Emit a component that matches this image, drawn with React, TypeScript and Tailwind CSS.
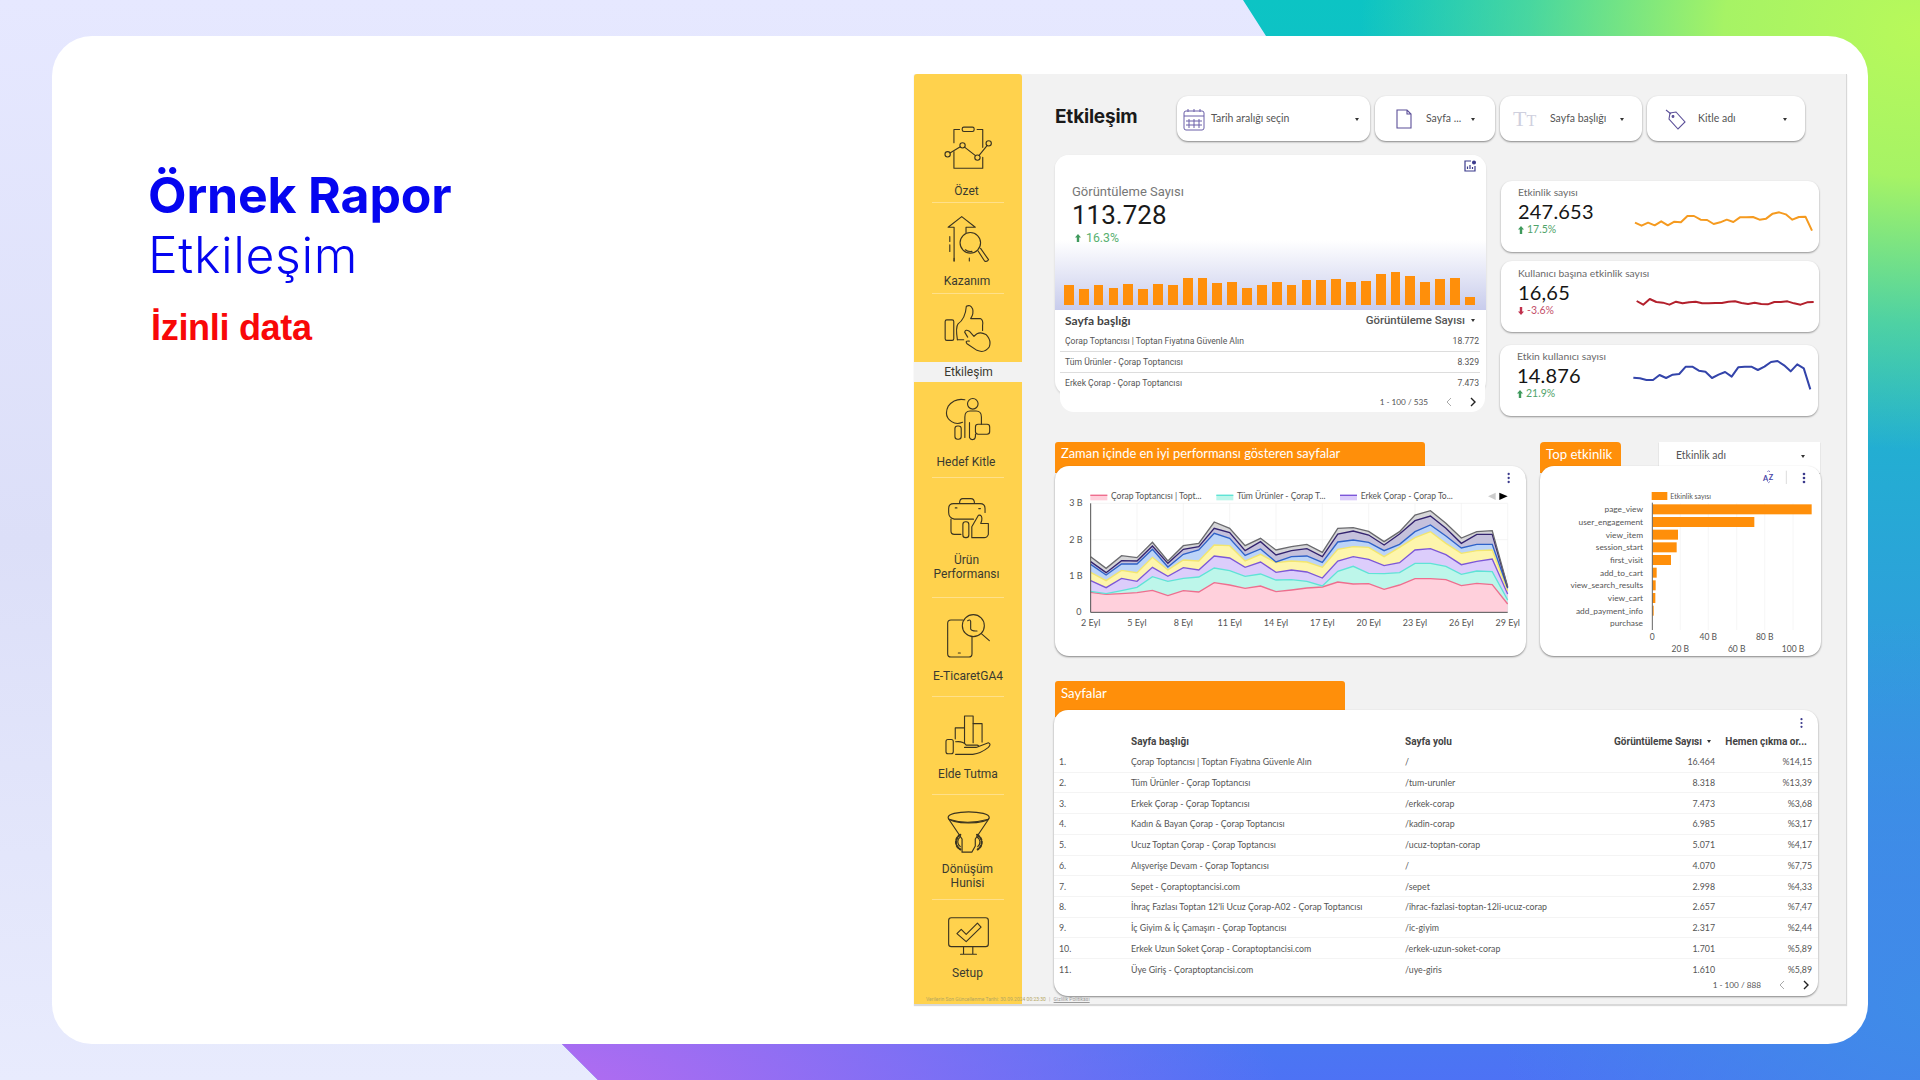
import React from "react";

const barTops = [616,627,616,625,612,627,612,614,593,593,608,605,623,616,605,616,599,599,597,605,603,582,577,588,605,597,595,652];
const s1 = [428,437,428,436,424,436,425,427,408,408,419,420,432,427,419,426,412,412,411,419,416,401,397,403,419,411,410,452];
const s2 = [663,674,657,666,668,674,665,670,667,665,670,670,669,669,665,664,669,672,668,672,673,666,666,664,670,674,667,666];
const s3 = [893,895,900,900,885,894,884,882,860,860,872,875,894,884,876,890,862,860,860,870,860,846,843,856,874,853,865,928];

const layers = [
  { fill: "#ffd0dc", stroke: "#ee6e8e", d: [487,493,491,488,481,497,482,486,458,465,475,468,485,480,474,471,456,462,461,478,465,446,446,449,467,460,464,522] },
  { fill: "#bdf6ea", stroke: "#5fe3d6", d: [484,491,482,472,440,454,445,441,414,422,439,432,450,449,454,468,424,409,430,431,428,400,400,409,433,423,425,510] },
  { fill: "#dccdfb", stroke: "#7c57d8", d: [452,473,445,454,412,439,413,420,378,384,412,396,427,420,426,444,393,380,388,407,398,360,356,374,404,394,387,492] },
  { fill: "#fdf5ac", stroke: "#f3e66e", d: [427,452,421,428,382,420,390,393,345,347,393,373,398,393,396,412,358,350,352,380,352,323,305,340,370,362,360,482] },
  { fill: "#bcd4f8", stroke: "#2f62c8", d: [403,435,402,402,358,411,373,360,310,325,376,357,396,380,378,397,336,330,337,362,343,305,285,318,354,343,343,475] },
  { fill: "#c5c1dc", stroke: "#33236f", d: [395,428,392,393,348,400,358,350,295,308,362,335,375,362,356,380,312,303,315,345,312,272,258,295,340,313,313,472] },
  { fill: "#d6d6d8", stroke: "#6a6a6e", d: [380,415,377,383,337,393,347,340,276,295,347,325,360,350,343,367,295,293,304,335,305,255,242,280,324,305,302,470] },
];

const pages = [
  ["1.", "Çorap Toptancısı | Toptan Fiyatına Güvenle Alın", "/", "16.464", "%14,15"],
  ["2.", "Tüm Ürünler - Çorap Toptancısı", "/tum-urunler", "8.318", "%13,39"],
  ["3.", "Erkek Çorap - Çorap Toptancısı", "/erkek-corap", "7.473", "%3,68"],
  ["4.", "Kadın & Bayan Çorap - Çorap Toptancısı", "/kadin-corap", "6.985", "%3,17"],
  ["5.", "Ucuz Toptan Çorap - Çorap Toptancısı", "/ucuz-toptan-corap", "5.071", "%4,17"],
  ["6.", "Alışverişe Devam - Çorap Toptancısı", "/", "4.070", "%7,75"],
  ["7.", "Sepet - Çoraptoptancisi.com", "/sepet", "2.998", "%4,33"],
  ["8.", "İhraç Fazlası Toptan 12'li Ucuz Çorap-A02 - Çorap Toptancısı", "/ihrac-fazlasi-toptan-12li-ucuz-corap", "2.657", "%7,47"],
  ["9.", "İç Giyim & İç Çamaşırı - Çorap Toptancısı", "/ic-giyim", "2.317", "%2,44"],
  ["10.", "Erkek Uzun Soket Çorap - Coraptoptancisi.com", "/erkek-uzun-soket-corap", "1.701", "%5,89"],
  ["11.", "Üye Giriş - Çoraptoptancisi.com", "/uye-giris", "1.610", "%5,89"],
];

const X = (i: number) => 152 + (1403 - 152) * i / 27;

function Ico({ vb, w, h, children }: { vb: string; w: number; h: number; children: React.ReactNode }) {
  return (
    <svg viewBox={vb} width={w} height={h} fill="none" stroke="#3b3420" strokeWidth={3.4} strokeLinecap="round" strokeLinejoin="round">
      {children}
    </svg>
  );
}

const icons = {
  ozet: (
    <Ico vb="122 195 154 135" w={51} h={45}>
      <rect x="180" y="201" width="36" height="13" rx="5" />
      <path d="M172 208H155V248M225 208H242V262M155 275V325H242V292" />
      <circle cx="181" cy="256" r="8" /><circle cx="226" cy="293" r="8" /><circle cx="136" cy="283" r="8" /><circle cx="260" cy="250" r="8" />
      <path d="M143 279L173 261M188 262L220 287M231 286L255 257" />
    </Ico>
  ),
  kazanim: (
    <Ico vb="130 465 135 145" w={45} h={48}>
      <path d="M154 604V502H136L177 470L218 502H190V518" />
      <circle cx="203" cy="549" r="31" />
      <path d="M188 570Q196 577 208 575M226 573L246 604Q253 608 258 600L234 566" />
      <path d="M141 530V545M141 555V575M200 595V604M154 596V604" />
    </Ico>
  ),
  etkilesim: (
    <Ico vb="133 730 150 148" w={50} h={49}>
      <rect x="139" y="778" width="26" height="62" rx="5" />
      <path d="M176 838Q170 800 178 790Q200 775 203 737Q215 730 222 745Q226 760 216 774H245Q255 778 252 795V810" />
      <path d="M207 830L198 815Q200 805 212 812L226 828Q240 810 262 822Q280 840 272 860Q258 880 235 870L205 850Q198 840 212 842" />
      <path d="M176 838H195" />
    </Ico>
  ),
  hedef: (
    <Ico vb="127 1008 145 135" w={48} h={45}>
      <circle cx="214" cy="1028" r="16" />
      <path d="M190 1130V1068Q190 1050 206 1050H224Q240 1050 240 1068V1090" />
      <path d="M204 1085V1130Q207 1138 215 1136Q222 1134 222 1125V1120" />
      <rect x="222" y="1090" width="43" height="30" rx="8" />
      <path d="M190 1016Q160 1010 140 1035Q125 1065 150 1082Q165 1092 183 1084" />
      <rect x="160" y="1095" width="19" height="40" rx="8" />
    </Ico>
  ),
  urun: (
    <Ico vb="50 25 130 130" w={43} h={43}>
      <path d="M88 44Q88 30 98 30H122Q133 30 133 44" />
      <path d="M70 45H150Q165 45 165 60V72M55 60Q55 45 70 45M55 60V72Q55 88 72 92H130" />
      <path d="M75 58H80M146 60H151" />
      <path d="M62 92V128Q62 138 72 138H92" />
      <rect x="98" y="100" width="18" height="48" rx="8" />
      <path d="M125 148V115L145 80Q158 78 155 96L152 105H175V138Q172 148 162 148Z" />
    </Ico>
  ),
  eticaret: (
    <Ico vb="135 340 135 138" w={45} h={46}>
      <path d="M185 361H150Q140 361 140 371V462Q140 472 150 472H203Q213 472 213 462V412" />
      <circle cx="217" cy="378" r="33" />
      <path d="M241 402L265 423M200 363Q207 358 209 365V388Q212 395 228 394M172 460H178" />
    </Ico>
  ),
  elde: (
    <Ico vb="128 645 145 125" w={48} h={42}>
      <rect x="134" y="718" width="22" height="43" rx="6" />
      <path d="M162 716V683H190V647H216V670H243V726" />
      <path d="M190 683V728M216 670V728" />
      <path d="M163 725Q185 722 195 735H228Q240 738 225 742H190M225 742L262 728Q272 732 262 742Q240 760 215 763H163" />
    </Ico>
  ),
  donusum: (
    <Ico vb="128 935 135 130" w={47} h={46}>
      <ellipse cx="196" cy="958" rx="59" ry="16" />
      <path d="M142 964Q190 980 250 964" />
      <path d="M138 962L177 1020V1058H205L215 1040V1020L254 962" />
      <path d="M172 1008A24 24 0 0 0 172 1050M220 1008A24 24 0 0 1 222 1050" strokeDasharray="7 5" strokeWidth="6" />
      <path d="M172 1014A17 17 0 0 0 172 1042M220 1014A17 17 0 0 1 222 1042" />
    </Ico>
  ),
  setup: (
    <Ico vb="135 1245 130 120" w={43} h={40}>
      <rect x="140" y="1250" width="120" height="87" rx="8" />
      <path d="M165 1298L178 1285L193 1300L227 1266L238 1278L193 1322Z" />
      <path d="M185 1337V1360M213 1337V1360M176 1360H224" />
    </Ico>
  ),
};

function NavItem({ h, icon, label, pb, active, noLine }: { h: string; icon: React.ReactNode; label: React.ReactNode; pb: string; active?: boolean; noLine?: boolean }) {
  return (
    <div className={`${h} flex flex-col items-center justify-end relative`}>
      <div className="flex justify-center">{icon}</div>
      <div className={`${pb} w-full text-center text-[12px] leading-[13.5px] text-[#3a3a30] ${active ? "bg-[#f2f2f2] mt-[9px] pt-[4px] h-[20px]" : ""}`}>{label}</div>
      {!noLine && <div className="w-[72px] h-px bg-[#ffe08a]" />}
    </div>
  );
}

function Caret() {
  return <span className="inline-block w-0 h-0 border-l-[2.5px] border-r-[2.5px] border-t-[3px] border-l-transparent border-r-transparent border-t-[#333]" />;
}

function Up({ c = "#3f9a5c", down }: { c?: string; down?: boolean }) {
  return (
    <svg width="6" height="8" viewBox="0 0 6 8" className={down ? "rotate-180" : ""}>
      <path d="M3 0L6 3.5H4.2V8H1.8V3.5H0Z" fill={c} />
    </svg>
  );
}

function Filter({ w, icon, label, gap, text, caretGap }: { w: string; icon: React.ReactNode; label: string; gap: string; text: string; caretGap: string }) {
  return (
    <div className={`${w} h-[45px] bg-white rounded-[11px] shadow-[0_1px_2px_rgba(0,0,0,0.45)] flex items-center pl-[6px] pt-[1px] ${gap}`}>
      {icon}
      <span className={`${text} text-[10.5px] text-[#555] font-['Lato']`}>{label}</span>
      <span className={`${caretGap} flex`}><Caret /></span>
    </div>
  );
}

function Spark({ d, x0, x1, y0, color }: { d: number[]; x0: number; x1: number; y0: number; color: string }) {
  const pts = d.map((v, i) => `${x0 + (x1 - x0) * i / 27},${v - y0}`).join(" ");
  return (
    <svg width="180" height="48" viewBox="459 0 540 144" className="shrink-0">
      <polyline points={pts} fill="none" stroke={color} strokeWidth="6" strokeLinejoin="round" />
    </svg>
  );
}

function Kpi({ label, value, delta, neg, spark, cls, top }: { label: string; value: string; delta: string; neg?: boolean; spark: React.ReactNode; cls: string; top: string }) {
  return (
    <div className={`${cls} shrink-0 w-[318px] h-[71px] bg-white rounded-[11px] shadow-[0_1px_2px_rgba(0,0,0,0.4)] flex items-start justify-between pl-[17px] pr-[5px] pt-[11px] font-['Lato'] relative`}>
      <div className={`${top} absolute left-[17px] flex flex-col`}>
        <span className="text-[10.3px] leading-[13px] text-[#6a6a6a] whitespace-nowrap">{label}</span>
        <span className="text-[20px] leading-[25px] text-[#151515] tracking-[0.2px]">{value}</span>
        <span className={`text-[10.5px] leading-[11px] flex items-center gap-[3px] ${neg ? "text-[#c4506a]" : "text-[#4fa36a]"}`}>
          <Up c={neg ? "#c0304c" : "#3f9a5c"} down={neg} />{delta}
        </span>
      </div>
      <div className="ml-auto">{spark}</div>
    </div>
  );
}

function Dots() {
  return (
    <svg width="3" height="10" viewBox="0 0 3 10" fill="#3b3a8c"><circle cx="1.5" cy="1.2" r="1.1" /><circle cx="1.5" cy="5" r="1.1" /><circle cx="1.5" cy="8.8" r="1.1" /></svg>
  );
}

function AreaChart() {
  const f = "Lato, sans-serif";
  const labels = ["2 Eyl","5 Eyl","8 Eyl","11 Eyl","14 Eyl","17 Eyl","20 Eyl","23 Eyl","26 Eyl","29 Eyl"];
  return (
    <svg viewBox="45 108 1413 570" width="471" height="190" className="block">
      {[1,2,3].map(i => <line key={i} x1="152" x2="1403" y1={547 - 109 * i} y2={547 - 109 * i} stroke="#efefef" strokeWidth="2" />)}
      {labels.map((_, i) => <line key={i} x1={152 + i * 139} x2={152 + i * 139} y1="220" y2="547" stroke="#f0f0f0" strokeWidth="2" />)}
      {layers.slice().reverse().map((l, idx) => {
        const top = l.d.map((v, i) => `${X(i)},${v}`).join(" ");
        return <polygon key={idx} points={`152,547 ${top} 1403,547`} fill={l.fill} />;
      })}
      {layers.map((l, idx) => (
        <polyline key={idx} points={l.d.map((v, i) => `${X(i)},${v}`).join(" ")} fill="none" stroke={l.stroke} strokeWidth="4" />
      ))}
      <path d="M152 220V547H1403" fill="none" stroke="#555" strokeWidth="3" />
      <g fontFamily={f} fontSize="27" fill="#555">
        <text x="88" y="229">3 B</text>
        <text x="88" y="338">2 B</text>
        <text x="88" y="447">1 B</text>
        <text x="109" y="556">0</text>
        {labels.map((t, i) => <text key={t} x={152 + i * 139} y="587" textAnchor="middle">{t}</text>)}
      </g>
      <g fontFamily={f} fontSize="25.5" fill="#555">
        <rect x="151" y="194" width="51" height="17" fill="#ffd0dc" /><rect x="151" y="194" width="51" height="4" fill="#ee6e8e" />
        <text x="213" y="208">Çorap Toptancısı | Topt...</text>
        <rect x="529" y="194" width="51" height="17" fill="#bdf6ea" /><rect x="529" y="194" width="51" height="4" fill="#5fe3d6" />
        <text x="591" y="208">Tüm Ürünler - Çorap T...</text>
        <rect x="900" y="194" width="51" height="17" fill="#dccdfb" /><rect x="900" y="194" width="51" height="4" fill="#7c57d8" />
        <text x="962" y="208">Erkek Çorap - Çorap To...</text>
      </g>
      <path d="M1367 188V210L1344 199Z" fill="#ccc" />
      <path d="M1378 188V210L1403 199Z" fill="#000" />
      <g fill="#3b3a8c"><circle cx="1406" cy="132" r="3.5" /><circle cx="1406" cy="144" r="3.5" /><circle cx="1406" cy="156" r="3.5" /></g>
    </svg>
  );
}

function EventChart() {
  const ev: [string, number][] = [["page_view",875],["user_engagement",703],["view_item",474],["session_start",470],["first_visit",453],["add_to_cart",410],["view_search_results",407],["view_cart",406],["add_payment_info",401],["purchase",397]];
  return (
    <svg viewBox="60 108 840 570" width="280" height="190" className="block">
      {[481,565,650,734,819].map(x => <line key={x} x1={x} x2={x} y1="220" y2="600" stroke="#f1f1f1" strokeWidth="2" />)}
      <rect x="395" y="186" width="47" height="24" fill="#ff8f0a" />
      <text x="451" y="206" fontFamily="Lato, sans-serif" fontSize="21" fill="#555">Etkinlik sayısı</text>
      {ev.map(([n, x], i) => (
        <g key={n}>
          <rect x="397" y={223 + i * 38} width={x - 397} height="30" fill="#ff8f0a" />
          <text x="369" y={247 + i * 38} textAnchor="end" fontFamily="Lato, sans-serif" fontSize="25" fill="#555">{n}</text>
        </g>
      ))}
      <line x1="397" x2="397" y1="218" y2="600" stroke="#666" strokeWidth="3" />
      <g fontFamily="Lato, sans-serif" fontSize="25.5" fill="#555" textAnchor="middle">
        <text x="397" y="630">0</text><text x="565" y="630">40 B</text><text x="734" y="630">80 B</text>
        <text x="481" y="665">20 B</text><text x="650" y="665">60 B</text><text x="819" y="665">100 B</text>
      </g>
      <g fontFamily="Lato, sans-serif" fontWeight="700" fill="#4a46a8" fontSize="22">
        <text x="729" y="154">A</text><text x="746" y="150">Z</text>
      </g>
      <path d="M742 126L746 122L750 126M742 154L746 158L750 154" fill="none" stroke="#4a46a8" strokeWidth="2" />
      <line x1="799" x2="799" y1="122" y2="162" stroke="#ddd" strokeWidth="3" />
      <g fill="#3b3a8c"><circle cx="852" cy="132" r="4" /><circle cx="852" cy="144" r="4" /><circle cx="852" cy="156" r="4" /></g>
    </svg>
  );
}

function Pager({ text }: { text: string }) {
  return (
    <div className="flex items-center font-['Lato'] text-[#555]">
      <span className="text-[8.2px] leading-none">{text}</span>
      <svg width="7" height="10" viewBox="0 0 7 10" fill="none" stroke="#aaa" strokeWidth="1" className="ml-[17px]"><path d="M6 1L2 5L6 9" /></svg>
      <svg width="7" height="10" viewBox="0 0 7 10" fill="none" stroke="#222" strokeWidth="1.4" className="ml-[18px]"><path d="M1 1L5 5L1 9" /></svg>
    </div>
  );
}

export default function App() {
  return (
    <div className="relative w-[1920px] h-[1080px] overflow-hidden bg-[linear-gradient(180deg,#e6e8ff_0%,#dcdff8_50%,#e8ebfd_100%)] pl-[52px] pt-[36px]">
      <div className="absolute inset-0 [clip-path:polygon(1243px_0,1920px_0,1920px_1080px,598px_1080px,562px_1044px,1266px_36px)] bg-[radial-gradient(560px_420px_at_1920px_30px,#b8f95a_0%,#a6f365_35%,rgba(120,230,130,0.55)_70%,rgba(20,200,190,0)_100%),radial-gradient(760px_320px_at_520px_1100px,#bb6bf0_0%,rgba(140,110,245,0.75)_55%,rgba(90,110,245,0)_100%),radial-gradient(420px_380px_at_1920px_1000px,#3f8ce8_0%,rgba(63,140,232,0)_100%),linear-gradient(180deg,#0cc4c4_0%,#1bb8cc_30%,#2f9edc_60%,#4285ea_85%,#4d72f5_100%)]" />
      <div className="relative w-[1816px] h-[1008px] bg-white rounded-[40px] flex">
        <div className="w-[862px] pl-[96px] pt-[129px] shrink-0">
          <div className="text-[50px] leading-[60px] font-bold text-[#0505f0] font-['Inter'] tracking-[-0.15px]">Örnek Rapor</div>
          <div className="text-[50px] leading-[60px] font-light text-[#0505f0] font-['Inter'] tracking-[0.6px]">Etkileşim</div>
          <div className="mt-[21px] ml-[3px] text-[36px] leading-[44px] font-bold text-[#f80808] font-['Liberation_Sans'] tracking-[-0.3px]">İzinli data</div>
        </div>
        <div className="relative mt-[38px] w-[933px] h-[931px] bg-[#f2f2f2] flex border-r border-b border-[#d8d8d8] shadow-[0_1px_1px_rgba(0,0,0,0.15)]">
          <div className="w-[108px] shrink-0 bg-[#ffd24d] rounded-t-[3px] flex flex-col font-['Roboto']">
            <NavItem h="h-[129px]" icon={icons.ozet} label="Özet" pb="mt-[15px] pb-[3px] pr-[3px]" />
            <NavItem h="h-[91px]" icon={icons.kazanim} label="Kazanım" pb="mt-[12px] pb-[4px] pr-[2px]" />
            <NavItem h="h-[88px]" icon={icons.etkilesim} label="Etkileşim" pb="pl-[1px]" active noLine />
            <NavItem h="h-[96px]" icon={icons.hedef} label="Hedef Kitle" pb="mt-[14px] pb-[7px] pr-[4px]" />
            <NavItem h="h-[121px]" icon={icons.urun} label={<>Ürün<br />Performansı</>} pb="mt-[14px] pb-[16px] pr-[3px]" />
            <NavItem h="h-[99px]" icon={icons.eticaret} label="E-TicaretGA4" pb="mt-[11px] pb-[13px]" />
            <NavItem h="h-[98px]" icon={icons.elde} label="Elde Tutma" pb="mt-[11px] pb-[13px]" />
            <NavItem h="h-[105px]" icon={icons.donusum} label={<>Dönüşüm<br />Hunisi</>} pb="mt-[8px] pb-[9px] pr-[1px]" />
            <NavItem h="h-[104px]" icon={icons.setup} label="Setup" pb="mt-[11px] pb-[24px] pr-[1px]" noLine />
          </div>

          <div className="flex-1 pl-[33px] pt-[22px] min-w-0">
            {/* Filters */}
            <div className="flex items-center h-[45px]">
              <div className="w-[122px] text-[19px] font-bold text-[#1a1a1a] font-['Inter'] tracking-[-0.2px] -mt-[3px]">Etkileşim</div>
              <div className="flex gap-[5px]">
                <Filter w="w-[193px]" gap="" text="ml-[6px]" caretGap="ml-[66px]" label="Tarih aralığı seçin" icon={
                  <svg width="22" height="23" viewBox="0 0 22 23" fill="none" stroke="#6a5fa8" strokeWidth="1"><rect x="1" y="3" width="20" height="19" rx="2" /><path d="M1 8H21M6 11V20M11 11V20M16 11V20M3 13H19M3 17H19M5 1V4M11 1V4M17 1V4" /></svg>
                } />
                <Filter w="w-[120px]" gap="pl-[21px]" text="ml-[14px]" caretGap="ml-[10px]" label="Sayfa ..." icon={
                  <svg width="16" height="20" viewBox="0 0 16 20" fill="none" stroke="#5b4f98" strokeWidth="1.1"><path d="M1 1H11L15 5V19H1ZM11 1V5H15" /></svg>
                } />
                <Filter w="w-[142px]" gap="pl-[13px]" text="ml-[11px]" caretGap="ml-[14px]" label="Sayfa başlığı" icon={
                  <span className="font-['Liberation_Serif'] text-[#cfd0de] leading-none text-[22px] w-[26px] whitespace-nowrap">T<span className="text-[16px]">T</span></span>
                } />
                <Filter w="w-[158px]" gap="pl-[18px]" text="ml-[12px]" caretGap="ml-[47px]" label="Kitle adı" icon={
                  <svg width="21" height="21" viewBox="0 0 21 21" fill="none" stroke="#5b4f98" strokeWidth="1.1"><path d="M5 4L11 3L20 13L13 20L4 10Z" /><path d="M1 1L6 5" /><circle cx="8" cy="7.5" r="0.9" fill="#5b4f98" /></svg>
                } />
              </div>
            </div>

            {/* KPI row */}
            <div className="flex mt-[14px] h-[257px]">
              <div className="w-[431px] h-[240px] bg-white rounded-[14px] shadow-[0_1px_2px_rgba(0,0,0,0.15)] font-['Roboto']">
                <div className="relative h-[155px] rounded-t-[14px] bg-[linear-gradient(180deg,#ffffff_0%,#ffffff_55%,#c8ccec_100%)] flex flex-col">
                  <div className="absolute right-[10px] top-[5px]">
                    <svg width="12" height="12" viewBox="0 0 12 12" fill="none" stroke="#3b3a8c" strokeWidth="1.2"><path d="M7 1H1V11H11V6" /><path d="M3.5 9V6.5M6 9V5M8.5 9V7" /><circle cx="10" cy="2.5" r="1.4" fill="#3b3a8c" /></svg>
                  </div>
                  <div className="pl-[17px] pt-[29px]">
                    <div className="text-[13px] leading-[16px] text-[#777]">Görüntüleme Sayısı</div>
                    <div className="text-[26px] leading-[30px] text-[#1a1a1a]">113.728</div>
                    <div className="mt-[1px] text-[12.3px] leading-[14px] text-[#57b070] flex items-center gap-[5px] pl-[3px]"><Up />16.3%</div>
                  </div>
                  <div className="absolute left-[9px] bottom-[5px] flex items-end gap-[5.05px]">
                    {barTops.map((t, i) => (
                      <div key={i} className="w-[9.8px] bg-[#ff8f0a]" style={{ height: (675 - t) / 3 }} />
                    ))}
                  </div>
                </div>
                <div className="ml-[5px] w-[425px] h-[102px] bg-white rounded-t-[5px] rounded-b-[14px] pr-[5px] relative">
                  <div className="flex justify-between items-center pl-[5px] pr-[5px] h-[21px]">
                    <span className="text-[12px] font-bold text-[#444] font-['Lato']">Sayfa başlığı</span>
                    <span className="text-[11.4px] font-medium text-[#555] flex items-center gap-[6px]">Görüntüleme Sayısı <Caret /></span>
                  </div>
                  {[["Çorap Toptancısı | Toptan Fiyatına Güvenle Alın","18.772"],["Tüm Ürünler - Çorap Toptancısı","8.329"],["Erkek Çorap - Çorap Toptancısı","7.473"]].map(([a,b],i)=>(
                    <div key={a} className={`flex justify-between items-center h-[21px] pl-[5px] pr-[1px] text-[8.6px] text-[#555] ${i<2?"border-b border-[#ddd]":""}`}>
                      <span>{a}</span><span>{b}</span>
                    </div>
                  ))}
                  <div className="flex justify-end pr-[3px] pt-[3px]"><Pager text="1 - 100 / 535" /></div>
                </div>
              </div>
              <div className="ml-[15px] pt-[26px] flex flex-col">
                <Kpi cls="" top="top-[5px]" label="Etkinlik sayısı" value="247.653" delta="17.5%" spark={<Spark d={s1} x0={462} x1={993} y0={336} color="#f59a1f" />} />
                <Kpi cls="mt-[9px]" top="top-[6px]" label="Kullanıcı başına etkinlik sayısı" value="16,65" delta="-3.6%" neg spark={<Spark d={s2} x0={467} x1={998} y0={576} color="#b3202c" />} />
                <Kpi cls="mt-[13px] -ml-px" top="top-[5px]" label="Etkin kullanıcı sayısı" value="14.876" delta="21.9%" spark={<Spark d={s3} x0={460} x1={991} y0={828} color="#3344aa" />} />
              </div>
            </div>

            {/* Charts */}
            <div className="flex mt-[30px] gap-[14px]">
              <div className="w-[471px]">
                <div className="w-[370px] h-[31px] bg-[#ff8f0a] rounded-t-[3px] text-white text-[12.9px] font-['Lato'] pl-[6px] pt-[2px]">Zaman içinde en iyi performansı gösteren sayfalar</div>
                <div className="relative -mt-[7px] bg-white rounded-[14px] shadow-[0_1px_2px_rgba(0,0,0,0.45)]"><AreaChart /></div>
              </div>
              <div className="w-[281px] relative">
                <div className="flex items-start">
                  <div className="w-[81px] h-[31px] bg-[#ff8f0a] rounded-t-[4px] text-white text-[13.2px] font-['Lato'] pl-[6px] pt-[3px]">Top etkinlik</div>
                  <div className="ml-[38px] w-[161px] h-[31px] bg-white shadow-[0_1px_1px_rgba(0,0,0,0.25)] flex items-center justify-between pl-[17px] pr-[15px] pb-[3px] text-[10.5px] font-['Lato'] text-[#555]">Etkinlik adı <Caret /></div>
                </div>
                <div className="relative -mt-[7px] bg-white rounded-[14px] shadow-[0_1px_2px_rgba(0,0,0,0.45)]"><EventChart /></div>
              </div>
            </div>

            {/* Table */}
            <div className="mt-[25px]">
              <div className="w-[290px] h-[36px] bg-[#ff8f0a] rounded-t-[3px] text-white text-[13.2px] font-['Lato'] pl-[6px] pt-[3px]">Sayfalar</div>
              <div className="relative -mt-[7px] -ml-px w-[764px] h-[286px] bg-white rounded-[14px] shadow-[0_1px_2px_rgba(0,0,0,0.45)] font-['Lato'] text-[8.8px] text-[#555]">
                <div className="absolute right-[15px] top-[8px]"><Dots /></div>
                <div className="h-[21px]" />
                <div className="grid grid-cols-[72px_274px_1fr_106px_97px] items-center h-[21px] pl-[5px] pr-[6px] font-bold text-[#444] font-['Roboto'] text-[10px]">
                  <span />
                  <span>Sayfa başlığı</span>
                  <span>Sayfa yolu</span>
                  <span className="flex items-center justify-end gap-[5px] whitespace-nowrap pr-[4px]">Görüntüleme Sayısı <Caret /></span>
                  <span className="text-right whitespace-nowrap pr-[5px]">Hemen çıkma or...</span>
                </div>
                {pages.map((p, i) => (
                  <div key={p[0]} className={`grid grid-cols-[72px_274px_1fr_106px_97px] items-center h-[20.72px] pl-[5px] pr-[6px] ${i < 10 ? "border-b border-[#f4f4f4]" : ""}`}>
                    <span>{p[0]}</span>
                    <span className="whitespace-nowrap">{p[1]}</span>
                    <span className="whitespace-nowrap">{p[2]}</span>
                    <span className="text-right">{p[3]}</span>
                    <span className="text-right">{p[4]}</span>
                  </div>
                ))}
                <div className="flex justify-end pr-[8px]"><Pager text="1 - 100 / 888" /></div>
              </div>
            </div>
          </div>

          <div className="absolute left-[12px] bottom-[1px] text-[5px] leading-[7px] text-[#b5a660] font-['Roboto'] whitespace-nowrap">
            Verilerin Son Güncellenme Tarihi: 30.09.2024 00:23:30 <span className="text-[#aaa] ml-[2px]">|</span> <span className="underline text-[#999] ml-[2px]">Gizlilik Politikası</span>
          </div>
        </div>
      </div>
    </div>
  );
}
